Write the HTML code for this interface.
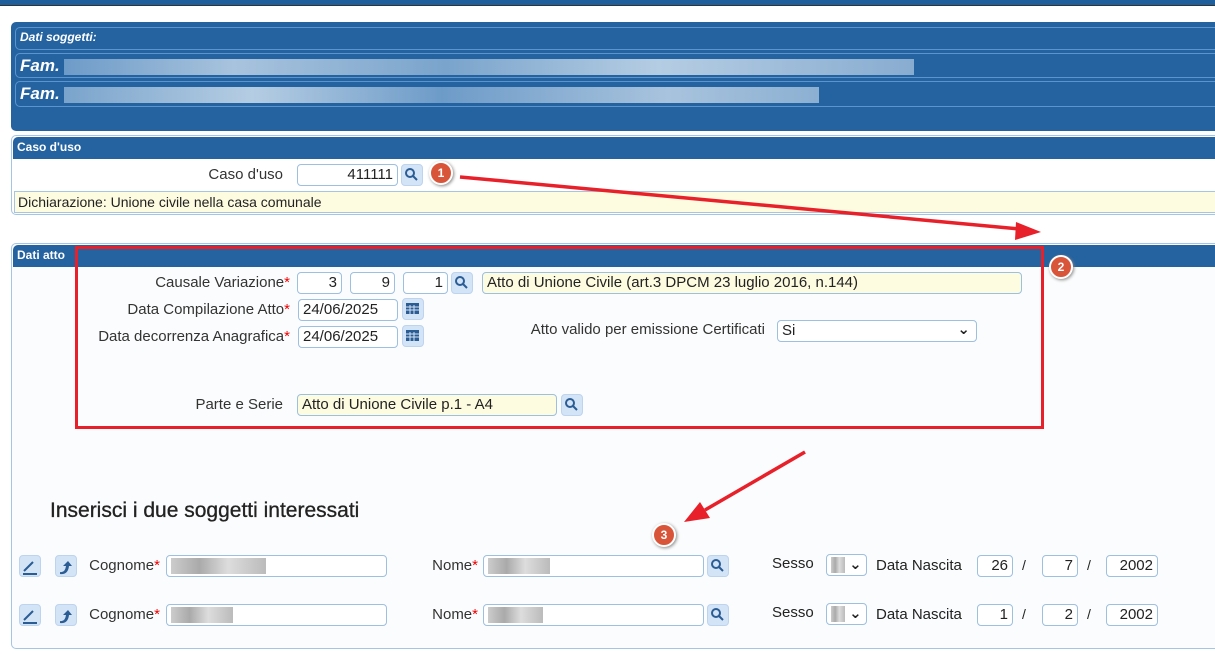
<!DOCTYPE html>
<html><head><meta charset="utf-8"><style>
*{box-sizing:border-box;margin:0;padding:0}
body{width:1215px;height:669px;background:#fff;position:relative;overflow:hidden;font-family:"Liberation Sans","DejaVu Sans",sans-serif;font-size:14px;color:#222}
.a{position:absolute}
.blue{background:#2462a0}
.row{position:absolute;left:15px;right:0;height:24px;border:1px solid #5b95cf;border-right:none;border-radius:5px 0 0 5px;color:#fff;font-weight:bold;font-style:italic;font-size:17px;padding:2px 4px;background:#2462a0;white-space:nowrap}
.inp{position:absolute;height:22px;border:1px solid #9dbfe0;border-radius:4px;background:#fff;font-size:15px;padding:1px 4px;line-height:18px;white-space:nowrap;overflow:hidden}
.r{text-align:right}
.y{background:#fdfbe0}
.btn{position:absolute;width:22px;height:22px;border-radius:4px;background:#d4e4f7;border:1px solid #bdd3ee}
.lbl{position:absolute;text-align:right;font-size:15px;color:#333}
.st{color:#e00}
.hdr{position:absolute;color:#fff;font-weight:bold;font-size:12px;padding:3px 4px;background:#2462a0;border-radius:5px 0 0 0;height:22px}
.blur{display:inline-block;height:16px;background:linear-gradient(90deg,#ccc,#aaa 30%,#ddd 60%,#bbb);vertical-align:middle}
.bd{position:absolute;width:24px;height:24px;border-radius:50%;background:#d9553a;color:#fff;font-weight:bold;font-size:12px;text-align:center;line-height:20px;border:2px solid #fff;box-shadow:1px 1px 3px #888}
</style></head><body>
<div class="a" style="left:0;top:0;width:1215px;height:6px;background:#1f5f9c;border-bottom:1px solid #333"></div>
<div class="a blue" style="left:11px;top:22px;width:1204px;height:109px;border-radius:5px 0 0 5px"></div>
<div class="row" style="top:27px;height:23px;font-size:12px">Dati soggetti:</div>
<div class="row" style="top:53px;height:25px">Fam. <span class="blur" style="width:850px;background:linear-gradient(90deg,#6d9bc8,#a8c3dd 20%,#7aa4cc 45%,#b5cde3 70%,#88acd0)"></span></div>
<div class="row" style="top:81px;height:26px">Fam. <span class="blur" style="width:755px;background:linear-gradient(90deg,#7aa4cc,#b5cde3 25%,#6d9bc8 50%,#a8c3dd 80%,#8cb0d2)"></span></div>
<div class="a" style="left:11px;top:135px;width:1204px;height:80px;border:1px solid #a5c5e2;border-right:none;border-radius:5px 0 0 5px;background:#fff"></div>
<div class="hdr" style="left:13px;top:137px;width:1202px">Caso d'uso</div>
<div class="lbl" style="left:150px;top:166px;width:133px">Caso d'uso</div>
<div class="inp r" style="left:297px;top:164px;width:101px">411111</div>
<div class="btn" style="left:401px;top:164px"></div>
<div class="a" style="left:14px;top:191px;width:1201px;height:22px;background:#fdfbe0;border:1px solid #a5c5e2;border-right:none;font-size:14px;padding:2px 3px">Dichiarazione: Unione civile nella casa comunale</div>
<div class="a" style="left:11px;top:243px;width:1204px;height:406px;border:1px solid #a5c5e2;border-right:none;border-radius:5px 0 0 5px;background:#fbfcfd"></div>
<div class="hdr" style="left:13px;top:245px;width:1202px">Dati atto</div>
<div class="lbl" style="left:60px;top:274px;width:230px">Causale Variazione<span class="st">*</span></div>
<div class="inp r" style="left:297px;top:272px;width:45px">3</div>
<div class="inp r" style="left:350px;top:272px;width:45px">9</div>
<div class="inp r" style="left:403px;top:272px;width:45px">1</div>
<div class="btn" style="left:451px;top:272px"></div>
<div class="inp y" style="left:482px;top:272px;width:540px">Atto di Unione Civile (art.3 DPCM 23 luglio 2016, n.144)</div>
<div class="lbl" style="left:40px;top:301px;width:250px">Data Compilazione Atto<span class="st">*</span></div>
<div class="inp" style="left:298px;top:299px;width:100px">24/06/2025</div>
<div class="btn" style="left:402px;top:298px"></div>
<div class="lbl" style="left:20px;top:328px;width:270px">Data decorrenza Anagrafica<span class="st">*</span></div>
<div class="inp" style="left:298px;top:326px;width:100px">24/06/2025</div>
<div class="btn" style="left:402px;top:325px"></div>
<div class="lbl" style="left:480px;top:321px;width:285px">Atto valido per emissione Certificati</div>
<div class="inp" style="left:777px;top:320px;width:200px">Si<span style="position:absolute;right:6px;top:0;font-weight:bold">⌄</span></div>
<div class="lbl" style="left:150px;top:396px;width:133px">Parte e Serie</div>
<div class="inp y" style="left:297px;top:394px;width:260px">Atto di Unione Civile p.1 - A4</div>
<div class="btn" style="left:561px;top:394px"></div>
<div class="a" style="left:75px;top:246px;width:969px;height:183px;border:3px solid #e8202a"></div>
<div class="a" style="left:50px;top:499px;font-size:21px;color:#222;-webkit-text-stroke:0.3px #222">Inserisci i due soggetti interessati</div>
<div class="btn" style="left:19px;top:555px"></div><div class="btn" style="left:55px;top:555px"></div>
<div class="lbl" style="left:60px;top:557px;width:100px">Cognome<span class="st">*</span></div>
<div class="inp" style="left:166px;top:555px;width:221px"><span class="blur" style="width:95px"></span></div>
<div class="lbl" style="left:400px;top:557px;width:78px">Nome<span class="st">*</span></div>
<div class="inp" style="left:483px;top:555px;width:221px"><span class="blur" style="width:62px"></span></div>
<div class="btn" style="left:707px;top:555px"></div>
<div class="a" style="left:772px;top:555px;font-size:15px">Sesso</div>
<div class="inp" style="left:826px;top:554px;width:41px"><span class="blur" style="width:14px"></span> <b>⌄</b></div>
<div class="a" style="left:876px;top:557px;font-size:15px">Data Nascita</div>
<div class="inp r" style="left:977px;top:555px;width:36px">26</div><div class="a" style="left:1022px;top:557px">/</div>
<div class="inp r" style="left:1042px;top:555px;width:36px">7</div><div class="a" style="left:1087px;top:557px">/</div>
<div class="inp r" style="left:1106px;top:555px;width:52px">2002</div>
<div class="btn" style="left:19px;top:604px"></div><div class="btn" style="left:55px;top:604px"></div>
<div class="lbl" style="left:60px;top:606px;width:100px">Cognome<span class="st">*</span></div>
<div class="inp" style="left:166px;top:604px;width:221px"><span class="blur" style="width:62px"></span></div>
<div class="lbl" style="left:400px;top:606px;width:78px">Nome<span class="st">*</span></div>
<div class="inp" style="left:483px;top:604px;width:221px"><span class="blur" style="width:55px"></span></div>
<div class="btn" style="left:707px;top:604px"></div>
<div class="a" style="left:772px;top:604px;font-size:15px">Sesso</div>
<div class="inp" style="left:826px;top:603px;width:41px"><span class="blur" style="width:14px"></span> <b>⌄</b></div>
<div class="a" style="left:876px;top:606px;font-size:15px">Data Nascita</div>
<div class="inp r" style="left:977px;top:604px;width:36px">1</div><div class="a" style="left:1022px;top:606px">/</div>
<div class="inp r" style="left:1042px;top:604px;width:36px">2</div><div class="a" style="left:1087px;top:606px">/</div>
<div class="inp r" style="left:1106px;top:604px;width:52px">2002</div>
<svg class="a" style="left:0;top:0" width="1215" height="669">
<g stroke="#2b5d94" stroke-width="2" fill="none">
<circle cx="410" cy="173" r="4"/><line x1="413" y1="176" x2="417" y2="180"/>
<circle cx="460" cy="281" r="4"/><line x1="463" y1="284" x2="467" y2="288"/>
<circle cx="570" cy="403" r="4"/><line x1="573" y1="406" x2="577" y2="410"/>
<circle cx="716" cy="564" r="4"/><line x1="719" y1="567" x2="723" y2="571"/>
<circle cx="716" cy="613" r="4"/><line x1="719" y1="616" x2="723" y2="620"/>
</g>
<g fill="#2b5d94"><rect x="406" y="303" width="13" height="11"/><rect x="406" y="330" width="13" height="11"/></g>
<g stroke="#d4e4f7" stroke-width="1"><line x1="406" y1="307" x2="419" y2="307"/><line x1="406" y1="310" x2="419" y2="310"/><line x1="410" y1="305" x2="410" y2="314"/><line x1="414" y1="305" x2="414" y2="314"/>
<line x1="406" y1="334" x2="419" y2="334"/><line x1="406" y1="337" x2="419" y2="337"/><line x1="410" y1="332" x2="410" y2="341"/><line x1="414" y1="332" x2="414" y2="341"/></g>
<g stroke="#2b5d94" stroke-width="2" fill="none">
<path d="M24 571 L33 562"/><line x1="23" y1="574" x2="37" y2="574"/>
<path d="M24 620 L33 611"/><line x1="23" y1="623" x2="37" y2="623"/>
</g>
<g fill="#2b5d94">
<path d="M60 572 q5 1 6 -6 l-3 0 l5 -5 l4 5 l-3 0 q-1 9 -9 8z"/>
<path d="M60 621 q5 1 6 -6 l-3 0 l5 -5 l4 5 l-3 0 q-1 9 -9 8z"/>
</g>
<g stroke="#e8202a" stroke-width="3.5" fill="#e8202a">
<line x1="460" y1="177" x2="1020" y2="229"/>
<polygon points="1041,232 1016,222 1015,240" stroke="none"/>
<line x1="805" y1="452" x2="705" y2="510"/>
<polygon points="684,522 700,502 710,518" stroke="none"/>
</g>
</svg>
<div class="bd" style="left:429px;top:161px">1</div>
<div class="bd" style="left:1049px;top:255px">2</div>
<div class="bd" style="left:652px;top:523px">3</div>
</body></html>
